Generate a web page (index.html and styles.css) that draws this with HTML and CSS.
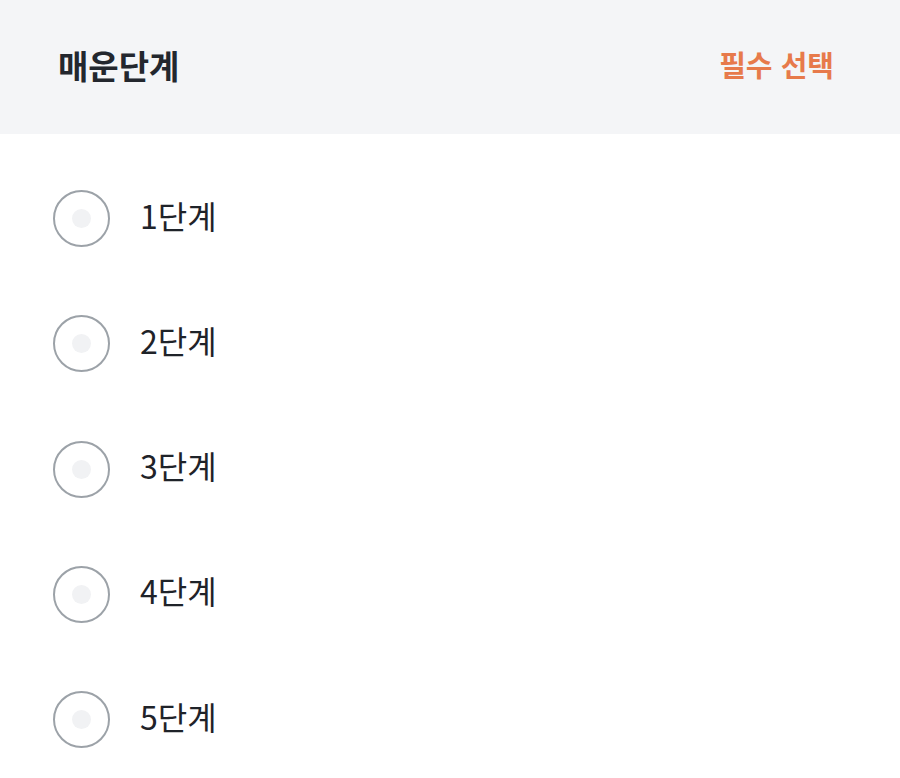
FILE: index.html
```html
<!DOCTYPE html>
<html lang="ko">
<head>
    <meta charset="UTF-8">
    <meta name="viewport" content="width=device-width, initial-scale=1.0">
    <title>매운단계</title>
    <link rel="stylesheet" href="styles.css">
</head>
<body>
    <div class="option-group">
        <div class="group-header">
            <h2 class="group-title">매운단계</h2>
            <span class="group-badge">필수 선택</span>
        </div>
        <ul class="option-list">
            <li class="option-item"><span class="radio"><span class="radio-dot"></span></span><span class="option-label">1단계</span></li>
            <li class="option-item"><span class="radio"><span class="radio-dot"></span></span><span class="option-label">2단계</span></li>
            <li class="option-item"><span class="radio"><span class="radio-dot"></span></span><span class="option-label">3단계</span></li>
            <li class="option-item"><span class="radio"><span class="radio-dot"></span></span><span class="option-label">4단계</span></li>
            <li class="option-item"><span class="radio"><span class="radio-dot"></span></span><span class="option-label">5단계</span></li>
        </ul>
    </div>
</body>
</html>
```

FILE: styles.css
```css
body {
    margin: 0;
    font-family: "Noto Sans CJK KR", "Noto Sans", sans-serif;
    background-color: #ffffff;
    color: #1f2329;
}

.option-group {
    width: 100%;
}

.group-header {
    display: flex;
    justify-content: space-between;
    align-items: center;
    height: 134px;
    padding: 0 66px 0 58px;
    background-color: #f4f5f7;
    box-sizing: border-box;
}

.group-title {
    margin: 0;
    font-size: 33px;
    font-weight: 700;
    color: #23272e;
    line-height: 1;
    padding-bottom: 4px;
}

.group-badge {
    font-size: 29px;
    font-weight: 700;
    color: #e77a4b;
    line-height: 1;
    padding-bottom: 6px;
}

.option-list {
    list-style: none;
    margin: 0;
    padding: 22px 0 0 53px;
}

.option-item {
    display: flex;
    align-items: center;
    height: 125.25px;
    gap: 30px;
}

.radio {
    display: flex;
    justify-content: center;
    align-items: center;
    width: 57px;
    height: 57px;
    border: 2px solid #9ca2a8;
    border-radius: 50%;
    box-sizing: border-box;
}

.radio-dot {
    width: 19px;
    height: 19px;
    border-radius: 50%;
    background-color: #f1f2f4;
}

.option-label {
    font-size: 32px;
    line-height: 1;
    color: #1f2329;
    padding-bottom: 8px;
}
```
